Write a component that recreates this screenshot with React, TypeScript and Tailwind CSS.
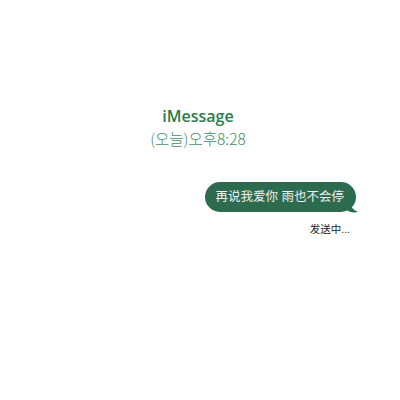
import React from 'react';

export default function App() {
  return (
    <div className="w-[400px] h-[400px] bg-white flex flex-col" style={{ fontFamily: '"Liberation Sans", "Noto Sans CJK SC", sans-serif' }}>
      {/* header */}
      <div className="pt-[106px] flex flex-col items-center gap-[2px] pr-[4px]">
        <span className="text-[16px] leading-[20px] font-semibold text-[#2c7a4c]" style={{ fontFamily: '"Open Sans", "Liberation Sans", sans-serif' }}>iMessage</span>
        <span className="text-[15.5px] leading-[20px] font-light text-[#3f9160]" style={{ fontFamily: '"Noto Sans CJK KR", "Liberation Sans", sans-serif' }}>(오늘)오후8:28</span>
      </div>

      {/* message */}
      <div className="mt-[34px] flex flex-col items-end pr-[44px]">
        <div className="relative">
          <div className="bg-[#2d6b4e] text-[#f2f2f2] text-[12.5px] leading-[30px] h-[30px] pl-[11px] pr-[12px] rounded-[15px]">
            再说我爱你 雨也不会停
          </div>
          <svg className="absolute right-[-5px] bottom-[-1px]" width="14" height="14" viewBox="0 0 14 14">
            <path d="M0 0 C2 6 6 11 11 13 C6 14 2 13 0 11 Z" fill="#2d6b4e" />
          </svg>
        </div>
        <span className="mt-[10px] mr-[6px] text-[10.5px] leading-[14px] text-[#222]">发送中...</span>
      </div>
    </div>
  );
}
